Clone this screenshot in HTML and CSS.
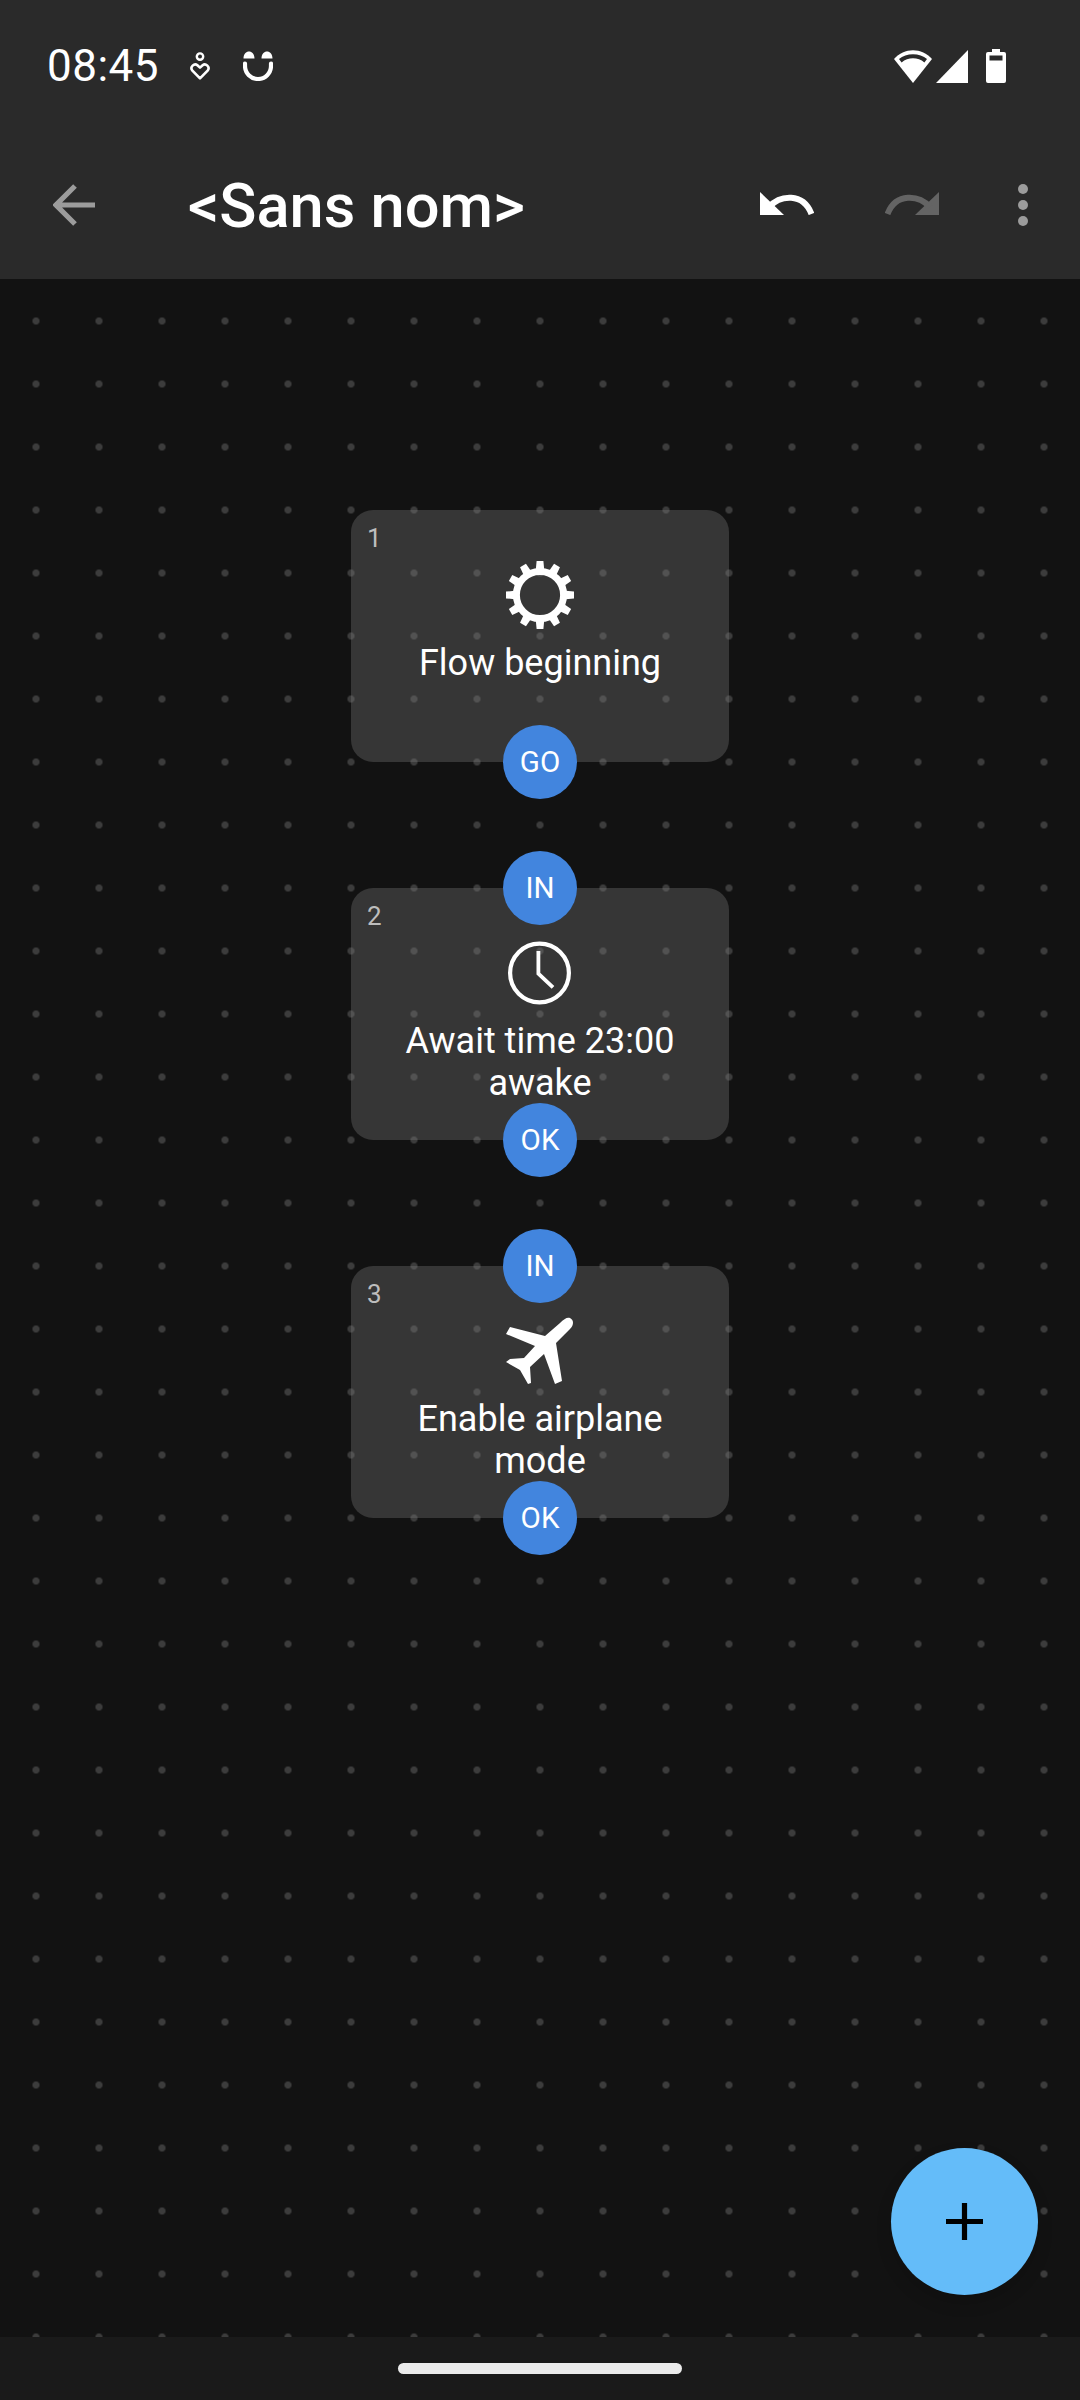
FILE: index.html
```html
<!DOCTYPE html>
<html lang="en">
<head>
    <meta charset="UTF-8">
    <meta name="viewport" content="width=device-width, initial-scale=1.0">
    <title>Flow editor</title>
    <link rel="icon" href="data:,">
    <link rel="stylesheet" href="styles.css">
</head>
<body>
    <div class="app">
        <header class="top">
            <div class="status-bar">
                <span class="clock">08:45</span>
                <svg class="st-heart" viewBox="0 0 20 28"><circle cx="10" cy="4.6" r="3.2" fill="none" stroke="#fff" stroke-width="2.4"/><path d="M10 26.4 L2.4 18.6 C-0.6 14.8 4.4 10.8 7.4 13.2 L10 15.6 L12.6 13.2 C15.6 10.8 20.6 14.8 17.6 18.6 Z" fill="none" stroke="#fff" stroke-width="2.6" stroke-linejoin="round"/></svg>
                <svg class="st-smile" viewBox="0 0 30 30"><path d="M0.5 7.5 C0.5 -2 11.5 -2 11.5 7.5 Z M18.5 7.5 C18.5 -2 29.5 -2 29.5 7.5 Z" fill="#fff"/><path d="M2 12.5 V15 A13 13 0 0 0 28 15 V12.5" fill="none" stroke="#fff" stroke-width="4.2" stroke-linecap="round"/></svg>
                <div class="spacer"></div>
                <svg class="st-wifi" viewBox="0 0 38 33"><path d="M19 33 L0 9 C10 -2.6 28 -2.6 38 9 Z" fill="#fff"/><path d="M5 9 C12 2.6 26 2.6 33 9 L30.4 12.4 C24 7 14 7 7.6 12.4 Z" fill="#2a2a2a"/></svg>
                <svg class="st-signal" viewBox="0 0 32 33"><path d="M32 0 V33 H0 Z" fill="#fff"/></svg>
                <svg class="st-battery" viewBox="0 0 20 34"><path d="M6 0 H14 V3 H18 A2 2 0 0 1 20 5 V32 A2 2 0 0 1 18 34 H2 A2 2 0 0 1 0 32 V5 A2 2 0 0 1 2 3 H6 Z" fill="#fff"/><rect x="3.5" y="6.5" width="13" height="5" fill="#2a2a2a"/></svg>
            </div>
            <div class="toolbar">
                <svg class="tb-back" viewBox="0 0 42 42"><path d="M42 21 H4 M22 2 L3 21 L22 40" fill="none" stroke="#9c9c9c" stroke-width="5.2"/></svg>
                <h1 class="title">&lt;Sans nom&gt;</h1>
                <div class="actions">
                    <div class="undo-clip">
                        <svg viewBox="0 0 54 23"><path d="M0 0 L24 23 H0 Z" fill="#fff"/><path d="M9 15 C20 3 43 0 51.5 22" fill="none" stroke="#fff" stroke-width="6"/></svg>
                    </div>
                    <div class="undo-clip redo">
                        <svg viewBox="0 0 54 23"><path d="M0 0 L24 23 H0 Z" fill="#646464"/><path d="M9 15 C20 3 43 0 51.5 22" fill="none" stroke="#646464" stroke-width="6"/></svg>
                    </div>
                    <div class="more"><i></i><i></i><i></i></div>
                </div>
            </div>
        </header>

        <main class="canvas">
            <div class="node node-1">
                <span class="num">1</span>
                <svg class="node-icon" viewBox="0 0 68 68">
                    <circle cx="34" cy="34" r="23.6" fill="none" stroke="#fff" stroke-width="7"/>
                    <g fill="#fff">
                        <path id="tooth" d="M30.6 0 H37.4 L38.4 11 H29.6 Z"/>
                        <use href="#tooth" transform="rotate(30 34 34)"/>
                        <use href="#tooth" transform="rotate(60 34 34)"/>
                        <use href="#tooth" transform="rotate(90 34 34)"/>
                        <use href="#tooth" transform="rotate(120 34 34)"/>
                        <use href="#tooth" transform="rotate(150 34 34)"/>
                        <use href="#tooth" transform="rotate(180 34 34)"/>
                        <use href="#tooth" transform="rotate(210 34 34)"/>
                        <use href="#tooth" transform="rotate(240 34 34)"/>
                        <use href="#tooth" transform="rotate(270 34 34)"/>
                        <use href="#tooth" transform="rotate(300 34 34)"/>
                        <use href="#tooth" transform="rotate(330 34 34)"/>
                    </g>
                </svg>
                <div class="label">Flow beginning</div>
                <span class="port port-out">GO</span>
            </div>

            <div class="node node-2">
                <span class="port port-in">IN</span>
                <span class="num">2</span>
                <svg class="node-icon" viewBox="0 0 68 68">
                    <circle cx="33.5" cy="34" r="29.4" fill="none" stroke="#fff" stroke-width="4.2"/>
                    <path d="M32.4 12 V34.6 L47 48.4" fill="none" stroke="#fff" stroke-width="3.8"/>
                </svg>
                <div class="label">Await time 23:00 awake</div>
                <span class="port port-out">OK</span>
            </div>

            <div class="node node-3">
                <span class="port port-in">IN</span>
                <span class="num">3</span>
                <svg class="node-icon" viewBox="0 0 68 68">
                    <path d="M64 1 C61 0 58 2 54 6 L39 19 L4 10 L0 17 L29 29 L18 41 L4 42 L0 45 L14 53 L22 67 L25 66 L24 50 L38 37 L49 67 L56 64 L50 26 L64 12 C68 8 68 3 64 1 Z" fill="#fff"/>
                </svg>
                <div class="label">Enable airplane mode</div>
                <span class="port port-out">OK</span>
            </div>

            <button class="fab">
                <svg viewBox="0 0 37 37"><path d="M18.5 0 V37 M0 18.5 H37" stroke="#000" stroke-width="5.2" fill="none"/></svg>
            </button>
        </main>

        <footer class="nav-bar"><div class="handle"></div></footer>
    </div>
</body>
</html>
```

FILE: styles.css
```css
* {
    box-sizing: border-box;
}
body {
    margin: 0;
    background: #121212;
    font-family: Roboto, sans-serif;
    color: #fff;
}
.app {
    display: flex;
    flex-direction: column;
    width: 1080px;
    height: 2400px;
}

/* top bars */
.top {
    height: 279px;
    background: #2a2a2a;
    flex-shrink: 0;
}
.status-bar {
    display: flex;
    align-items: center;
    height: 132px;
    padding: 0 74px 0 47px;
}
.clock {
    width: 112px;
    font-size: 44px;
    letter-spacing: 0.5px;
    line-height: 1;
    white-space: nowrap;
}
.st-heart {
    width: 20px;
    height: 28px;
    margin-left: 31px;
}
.st-smile {
    width: 30px;
    height: 30px;
    margin-left: 33px;
}
.spacer {
    flex: 1;
}
.st-wifi {
    width: 38px;
    height: 33px;
}
.st-signal {
    width: 32px;
    height: 33px;
    margin-left: 4px;
}
.st-battery {
    width: 20px;
    height: 34px;
    margin-left: 18px;
}
.toolbar {
    display: flex;
    align-items: center;
    height: 147px;
    padding-bottom: 1px;
    padding-left: 53px;
}
.tb-back {
    width: 42px;
    height: 42px;
}
.title {
    margin: 4px 0 0 93px;
    font-size: 61.4px;
    font-weight: 500;
    line-height: 1;
}
.actions {
    display: flex;
    align-items: center;
    margin-left: auto;
    padding-right: 52px;
}
.undo-clip {
    width: 54px;
    height: 23px;
    margin-top: -3px;
}
.undo-clip svg {
    display: block;
    width: 100%;
    height: 100%;
}
.redo {
    margin-left: 71px;
    transform: scaleX(-1);
}
.more {
    display: flex;
    flex-direction: column;
    gap: 5.5px;
    margin-left: 79px;
}
.more i {
    display: block;
    width: 10.5px;
    height: 10.5px;
    border-radius: 50%;
    background: #9c9c9c;
}

/* flow canvas, dots show through the translucent nodes */
.canvas {
    position: relative;
    flex: 1;
    overflow: hidden;
    background-image: radial-gradient(circle at 31.5px 31.5px, #3c3c3c 3.2px, transparent 3.9px);
    background-size: 63px 63px;
    background-position: 4.5px 10.5px;
}
.node {
    position: absolute;
    left: 351px;
    display: flex;
    flex-direction: column;
    align-items: center;
    width: 378px;
    height: 252px;
    border-radius: 22px;
    background: rgba(128, 128, 128, 0.33);
}
.node-1 {
    top: 231px;
}
.node-2 {
    top: 609px;
}
.node-3 {
    top: 987px;
}
.num {
    position: absolute;
    left: 16px;
    top: 13px;
    font-size: 26px;
    line-height: 30px;
    color: #bdbdbd;
}
.node-icon {
    width: 68px;
    height: 68px;
    margin-top: 51px;
    flex-shrink: 0;
}
.label {
    width: 300px;
    margin-top: 13px;
    font-size: 36px;
    line-height: 42px;
    text-align: center;
}
.port {
    position: absolute;
    left: 152px;
    z-index: 3;
    display: flex;
    align-items: center;
    justify-content: center;
    width: 74px;
    height: 74px;
    border-radius: 50%;
    background: #4285de;
    font-size: 29.5px;
}
.port-in {
    top: -37px;
}
.port-out {
    bottom: -37px;
}
.fab {
    position: absolute;
    z-index: 3;
    left: 891px;
    top: 1869px;
    display: flex;
    align-items: center;
    justify-content: center;
    width: 147px;
    height: 147px;
    padding: 0;
    border: none;
    border-radius: 50%;
    background: #64bcf9;
    box-shadow: 0 8px 16px rgba(0, 0, 0, 0.15);
}
.fab svg {
    width: 37px;
    height: 37px;
}

/* gesture bar */
.nav-bar {
    display: flex;
    justify-content: center;
    height: 63px;
    padding-top: 26px;
    background: #1a1a1a;
    flex-shrink: 0;
}
.handle {
    width: 284px;
    height: 11px;
    border-radius: 6px;
    background: #ebebeb;
}
```
